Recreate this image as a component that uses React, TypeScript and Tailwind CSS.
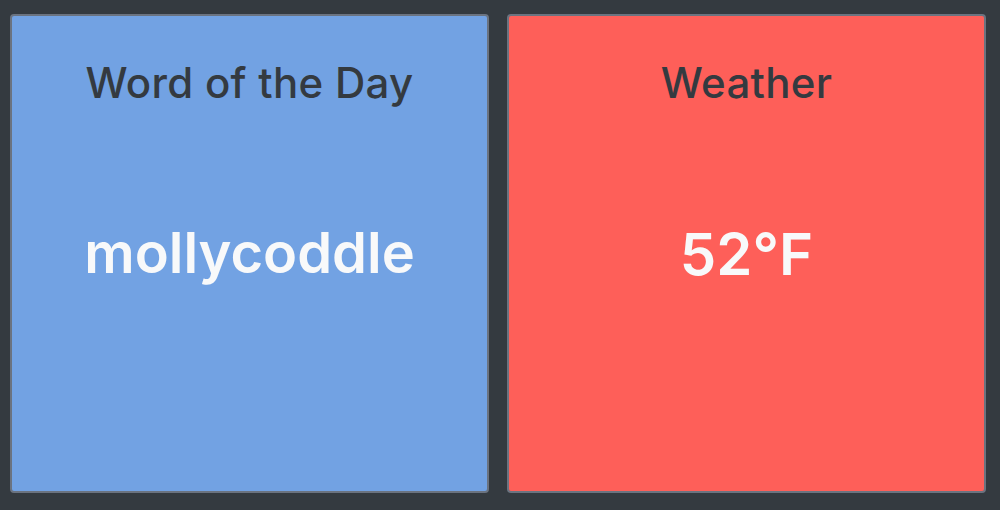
import React from 'react';

interface CardProps {
  title: string;
  value: string;
  bg: string;
  valueClass: string;
}

const Card: React.FC<CardProps> = ({ title, value, bg, valueClass }) => (
  <div className={`w-[479px] h-[479px] shrink-0 rounded-[4px] border-2 border-[#6b7380] ${bg} flex flex-col items-center`}>
    <h1 className="mt-[43px] text-[42px] leading-[48px] font-medium text-[#343a40] tracking-[0.3px]">{title}</h1>
    <div className={`mt-[118px] leading-none font-semibold text-[#f8f9fa] ${valueClass}`}>{value}</div>
  </div>
);

const App: React.FC = () => {
  return (
    <div
      className="w-full h-[510px] bg-[#343a40] flex gap-[18px] pl-[10px] pt-[14px]"
      style={{ fontFamily: 'Inter, "Noto Sans", sans-serif' }}
    >
      <Card title="Word of the Day" value="mollycoddle" bg="bg-[#72a2e3]" valueClass="text-[56px]" />
      <Card title="Weather" value="52°F" bg="bg-[#fe5f59]" valueClass="text-[58px]" />
    </div>
  );
};

export default App;
